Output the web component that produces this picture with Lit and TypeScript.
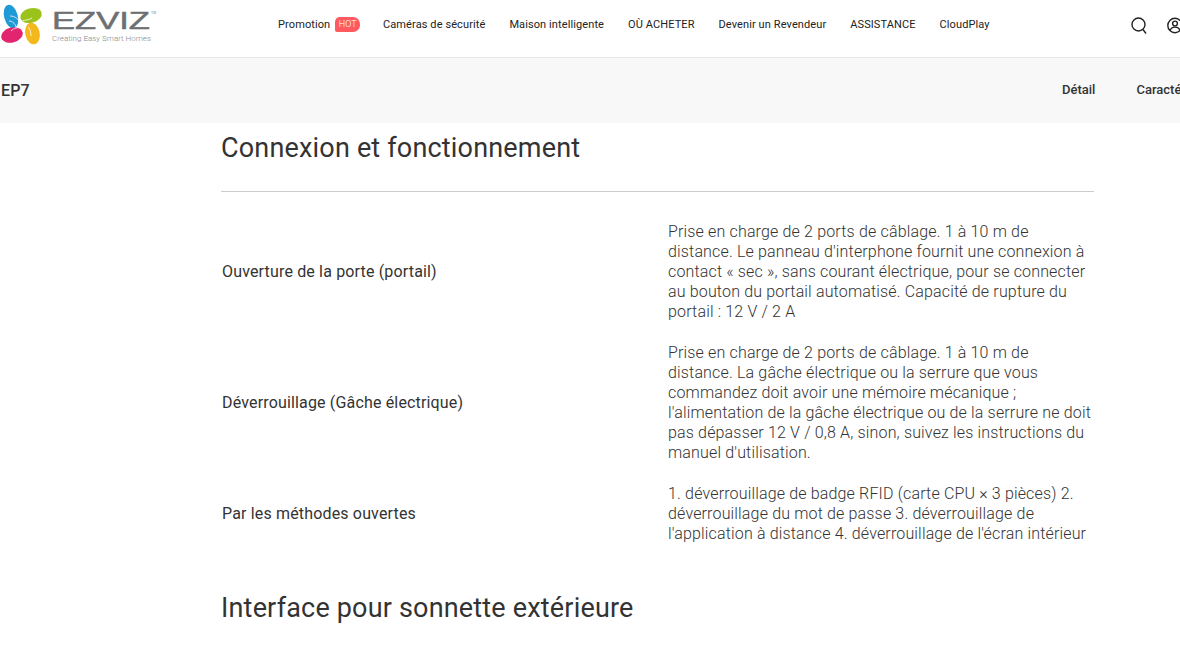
import { css, html, LitElement } from "lit";
import { customElement } from "lit/decorators.js";

const navItems = [
	"Caméras de sécurité",
	"Maison intelligente",
	"OÙ ACHETER",
	"Devenir un Revendeur",
	"ASSISTANCE",
	"CloudPlay",
];

const specs = [
	{
		label: "Ouverture de la porte (portail)",
		value:
			"Prise en charge de 2 ports de câblage. 1 à 10 m de distance. Le panneau d'interphone fournit une connexion à contact « sec », sans courant électrique, pour se connecter au bouton du portail automatisé. Capacité de rupture du portail : 12 V / 2 A",
	},
	{
		label: "Déverrouillage (Gâche électrique)",
		value:
			"Prise en charge de 2 ports de câblage. 1 à 10 m de distance. La gâche électrique ou la serrure que vous commandez doit avoir une mémoire mécanique ; l'alimentation de la gâche électrique ou de la serrure ne doit pas dépasser 12 V / 0,8 A, sinon, suivez les instructions du manuel d'utilisation.",
	},
	{
		label: "Par les méthodes ouvertes",
		value:
			"1. déverrouillage de badge RFID (carte CPU × 3 pièces) 2. déverrouillage du mot de passe 3. déverrouillage de l'application à distance 4. déverrouillage de l'écran intérieur",
	},
];

@customElement("app-root")
export class AppRoot extends LitElement {
	static override styles = css`
		:host {
			display: block;
			width: 1180px;
			height: 646px;
			overflow: hidden;
			background: #fff;
			color: #333;
			font-family: Roboto, "Liberation Sans", sans-serif;
		}

		.header {
			display: flex;
			align-items: flex-start;
			box-sizing: border-box;
			height: 58px;
			border-bottom: 1px solid #e6e6e6;
			overflow: hidden;
		}

		.logo {
			display: block;
			flex: none;
			width: 278px;
			height: 50px;
		}

		.nav {
			display: flex;
			align-items: center;
			gap: 24px;
			height: 16px;
			margin-top: 16px;
			font-size: 11px;
			letter-spacing: 0.1px;
			color: #222;
			white-space: nowrap;
		}

		.promo {
			display: flex;
			align-items: center;
			gap: 5px;
			margin-right: -1px;
		}

		.hot {
			background: #ff5a5f;
			color: #fff;
			font-size: 9px;
			font-weight: 300;
			letter-spacing: 0;
			line-height: 15px;
			padding: 0 3.5px;
			border-radius: 5px 7px 7px 2px;
		}

		.tools {
			display: flex;
			align-items: center;
			gap: 20px;
			margin-left: auto;
			margin-right: -3px;
			padding-top: 17px;
		}

		.tools svg {
			display: block;
			flex: none;
			fill: none;
			stroke: #222;
			stroke-width: 1.4;
		}

		.subbar {
			display: flex;
			align-items: center;
			justify-content: space-between;
			height: 65px;
			background: #f8f8f8;
			padding-left: 1px;
			white-space: nowrap;
		}

		.product {
			font-size: 16px;
			font-weight: 500;
			letter-spacing: 0.16px;
			color: #333;
		}

		.anchors {
			display: flex;
			gap: 41px;
			width: 118px;
			margin-top: -2px;
			font-size: 13px;
			font-weight: 500;
			color: #333;
		}

		.content {
			width: 873px;
			margin-left: 221px;
		}

		h2 {
			margin: 0;
			font-size: 27px;
			font-weight: 400;
			letter-spacing: 0.18px;
			line-height: 36px;
			color: #333;
		}

		.title {
			padding: 7px 0 25px;
			border-bottom: 1px solid #ccc;
		}

		.specs {
			display: flex;
			flex-direction: column;
			gap: 21px;
			margin-top: 30px;
		}

		.row {
			display: grid;
			grid-template-columns: 447px 1fr;
			align-items: center;
			font-size: 16px;
			letter-spacing: 0.16px;
			line-height: 20px;
		}

		.label {
			padding-left: 1px;
		}

		.value {
			font-weight: 300;
		}

		.next {
			margin-top: 46px;
		}
	`;

	private renderLogo() {
		return html`
			<svg class="logo" viewBox="0 0 278 50">
				<ellipse cx="11" cy="16.500" rx="6.800" ry="12" fill="#1e9ad6" transform="rotate(-15 11 16.500)" />
				<ellipse cx="31" cy="15.500" rx="11" ry="7.200" fill="#9bc31c" transform="rotate(-15 31 15.500)" />
				<ellipse cx="12" cy="35" rx="11" ry="7.500" fill="#e2256e" transform="rotate(-15 12 35)" />
				<ellipse cx="32.500" cy="33.500" rx="7.200" ry="11" fill="#f2b81c" transform="rotate(-12 32.500 33.500)" />
				<g fill="none" stroke="#fff" stroke-width="0.9" opacity="0.85">
					<path d="M9 21c3 0 6 2 7 6" />
					<path d="M10 16c5 0 9 3 11 9" />
					<path d="M11 31c3-3 7-4 11-3" />
					<path d="M28 27c2 2 3 5 3 9" />
					<path d="M22 21c3-1 7-1 10-3" />
				</g>
				<text x="52" y="29" font-size="24" font-family="Liberation Sans" textLength="98" lengthAdjust="spacingAndGlyphs" fill="#6e6f71" stroke="#6e6f71" stroke-width="0.5">EZVIZ</text>
				<text x="151" y="14" font-size="3.500" font-family="Liberation Sans" fill="#888">TM</text>
				<text x="52" y="41" font-size="8" font-weight="300" font-family="Roboto" fill="#888">Creating Easy Smart Homes</text>
			</svg>
		`;
	}

	override render() {
		return html`
			<header class="header">
				${this.renderLogo()}
				<nav class="nav">
					<span class="promo">Promotion <span class="hot">HOT</span></span>
					${navItems.map((item) => html`<span>${item}</span>`)}
				</nav>
				<div class="tools">
					<svg width="16" height="17" viewBox="0 0 16 17">
						<circle cx="7.500" cy="7.500" r="6.500" />
						<path d="M12 12.500l3 4" />
					</svg>
					<svg width="16" height="17" viewBox="0 0 16 17">
						<circle cx="8" cy="8.500" r="7.200" />
						<circle cx="8" cy="6.500" r="2.400" />
						<path d="M3 13.500c.8-2.400 2.800-3.400 5-3.400s4.200 1 5 3.400" />
					</svg>
				</div>
			</header>
			<div class="subbar">
				<span class="product">EP7</span>
				<div class="anchors"><span>Détail</span><span>Caractéristiques</span></div>
			</div>
			<main class="content">
				<div class="title"><h2>Connexion et fonctionnement</h2></div>
				<div class="specs">
					${specs.map(
						(spec) => html`
							<div class="row">
								<div class="label">${spec.label}</div>
								<div class="value">${spec.value}</div>
							</div>
						`,
					)}
				</div>
				<h2 class="next">Interface pour sonnette extérieure</h2>
			</main>
		`;
	}
}

declare global {
	interface HTMLElementTagNameMap {
		"app-root": AppRoot;
	}
}
